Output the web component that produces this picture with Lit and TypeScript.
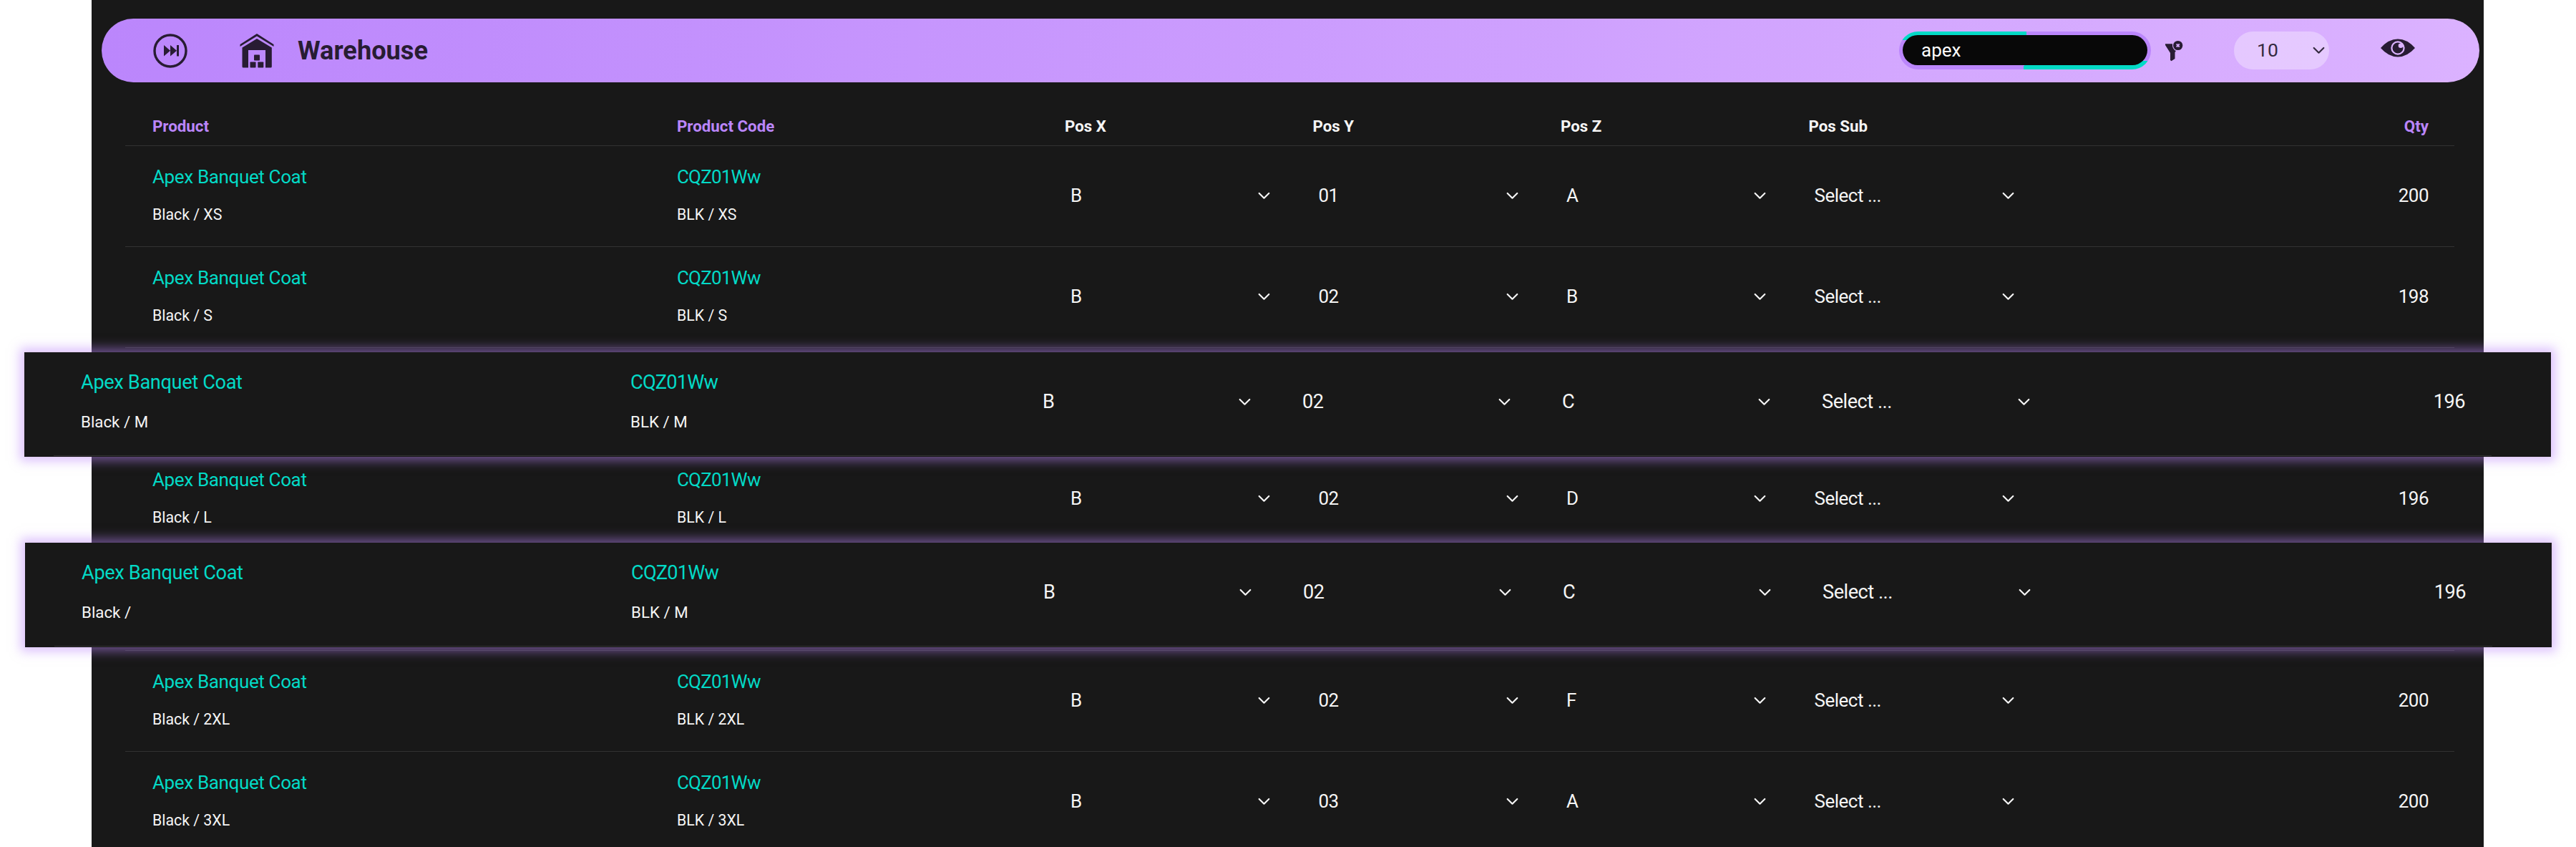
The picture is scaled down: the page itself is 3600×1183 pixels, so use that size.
import { LitElement, html, css } from "lit";
import { customElement } from "lit/decorators.js";

const chevron = html`<svg class="chev" width="17" height="11" viewBox="0 0 17 11"><path d="M1.700 2L8.500 8.700L15.300 2" fill="none" stroke="currentColor" stroke-width="2.200" stroke-linecap="round" stroke-linejoin="round"/></svg>`;

type Row = { size: string; label?: string; y: string; z: string; qty: string; pop?: string };

const ROWS: Row[] = [
  { size: "XS", y: "01", z: "A", qty: "200" },
  { size: "S", y: "02", z: "B", qty: "198" },
  { size: "M", y: "02", z: "C", qty: "196", pop: "first" },
  { size: "L", y: "02", z: "D", qty: "196" },
  { size: "M", label: "Black /", y: "02", z: "C", qty: "196", pop: "second" },
  { size: "2XL", y: "02", z: "F", qty: "200" },
  { size: "3XL", y: "03", z: "A", qty: "200" },
];

@customElement("app-root")
export class AppRoot extends LitElement {
  static styles = css`
    :host { display: block; width: 3600px; height: 1183px; overflow: hidden; background: #fff; font-family: Roboto, sans-serif; color: #f5f5f5; }
    * { box-sizing: border-box; }
    .panel { width: 3343px; height: 1183px; margin-left: 128px; background: #181818; padding: 26px 6px 0 14px; }
    .bar { height: 89px; border-radius: 44.5px; background: linear-gradient(90deg, #bb86fc, #dbb2ff); display: flex; align-items: center; color: #281c33; }
    .bar svg { display: block; flex: none; }
    .skip { margin-left: 72px; }
    .house { margin-left: 73px; }
    .title { font-size: 36.2px; font-weight: 700; margin-left: 33px; flex: 1; line-height: 42px; }
    .search { width: 352px; height: 53px; border-radius: 26.5px; padding: 5px 5px 6px; background: conic-gradient(from 4deg, #bb86fc 0 91deg, #03dac6 91deg 180deg, #bb86fc 180deg 271deg, #03dac6 271deg); }
    .field { height: 42px; border-radius: 21px; background: #080808; color: #fff; font-size: 26px; line-height: 43px; padding-left: 26px; }
    .funnel { margin-left: 19px; }
    .pager { width: 133px; height: 53px; border-radius: 26.5px; background: rgba(255,255,255,.33); margin-left: 71px; display: flex; align-items: center; justify-content: space-between; padding: 0 6px 0 32px; font-size: 26.5px; line-height: 32px; color: #352a40; }
    .pager span { margin-top: -2px; }
    .eye { margin: -8px 90px 0 72px; }
    .table { margin: 0 35px 0 33px; }
    .row { display: grid; grid-template-columns: 733px 542px 346.5px 346.5px 346.5px 1fr 120px; padding: 0 36px 0 38px; height: 141px; border-bottom: 1px solid #323232; }
    .row.head { height: 89px; font-size: 22.3px; font-weight: 700; line-height: 26px; padding-top: 48px; }
    .sort { color: #bb86fc; }
    .right { text-align: right; }
    .name { color: #03dac6; font-size: 26px; letter-spacing: -0.36px; line-height: 32px; padding-top: 27px; }
    .code { letter-spacing: -0.8px; }
    .sub { font-size: 21.3px; line-height: 26px; padding-top: 24px; }
    .pick { display: flex; align-items: center; justify-content: space-between; width: 287px; height: 32px; margin-top: 53px; padding-left: 8px; font-size: 26px; letter-spacing: -0.5px; }
    .qty { text-align: right; font-size: 26px; letter-spacing: -0.5px; line-height: 32px; margin-top: 53px; }
    .slot { height: 141px; border-bottom: 1px solid #323232; position: relative; }
    .lift { position: absolute; z-index: 2; width: 3531px; height: 146px; padding: 0 83px 0 41px; background: #181818; box-shadow: 0 0 14px 6px rgba(187,134,252,.5); }
    .first { left: -141px; top: 6px; }
    .second { left: -140px; top: -10px; }
    .lift .row { height: 145px; grid-template-columns: 768px 568px 363px 363px 363px 1fr 120px; padding: 0 37px 0 38px; }
    .lift .name { font-size: 27.2px; padding-top: 26px; }
    .lift .sub { font-size: 22.3px; padding-top: 26px; }
    .lift .pick { width: 299px; margin-top: 53px; font-size: 27.2px; }
    .lift .qty { margin-top: 53px; font-size: 27.2px; }
  `;

  private cells(r: Row) {
    const pick = (v: string) => html`<div class="pick"><span>${v}</span>${chevron}</div>`;
    return html`<div class="row">
      <div><div class="name">Apex Banquet Coat</div><div class="sub">${r.label ?? `Black / ${r.size}`}</div></div>
      <div><div class="name code">CQZ01Ww</div><div class="sub">BLK / ${r.size}</div></div>
      ${pick("B")}${pick(r.y)}${pick(r.z)}${pick("Select ...")}
      <div class="qty">${r.qty}</div>
    </div>`;
  }

  render() {
    return html`<div class="panel">
      <div class="bar">
        <svg class="skip" width="48" height="48" viewBox="0 0 48 48"><circle cx="24" cy="24" r="22" fill="none" stroke="currentColor" stroke-width="3.400"/><path d="M15 16l9 7.700-9 7.700zM24 16l9 7.700-9 7.700zM33 16h3v15.400h-3z" fill="currentColor"/></svg>
        <svg class="house" width="48" height="48" viewBox="0 0 48 48" fill="currentColor"><path d="M24 0L47.500 15v3L24 3.500L.5 18v-3z"/><path d="M24 7L44.800 19.500V46q0 1.500-1.500 1.500H36V23H12v24.500H5q-1.500 0-1.500-1.500V19.500z"/><rect x="20" y="29.500" width="8" height="8" rx=".8"/><rect x="14.500" y="39.500" width="8" height="8" rx=".8"/><rect x="25.300" y="39.500" width="8" height="8" rx=".8"/></svg>
        <div class="title">Warehouse</div>
        <div class="search"><div class="field">apex</div></div>
        <svg class="funnel" width="26" height="30" viewBox="0 0 26 30" fill="currentColor"><path d="M1 5.200h10q-.5 7.500 5 9.800L14.500 17v9L9.500 29.300 8 28V18L1 7z"/><circle cx="18.700" cy="7.500" r="6.600"/><path d="M16.700 5.500l4 4M20.700 5.500l-4 4" stroke="#d6aaff" stroke-width="1.800"/></svg>
        <div class="pager"><span>10</span>${chevron}</div>
        <svg class="eye" width="48" height="26" viewBox="0 0 48 26"><path d="M0 13Q11 .5 24 .5T48 13Q37 25.500 24 25.500T0 13z" fill="currentColor"/><circle cx="24" cy="13" r="8.600" fill="none" stroke="#dbb2ff" stroke-width="2.200"/><circle cx="28" cy="9.800" r="3.300" fill="#dbb2ff"/></svg>
      </div>
      <div class="table">
        <div class="row head"><span class="sort">Product</span><span class="sort">Product Code</span><span>Pos X</span><span>Pos Y</span><span>Pos Z</span><span>Pos Sub</span><span class="sort right">Qty</span></div>
        ${ROWS.map((r) => (r.pop ? html`<div class="slot"><div class="lift ${r.pop}">${this.cells(r)}</div></div>` : this.cells(r)))}
      </div>
    </div>`;
  }
}
